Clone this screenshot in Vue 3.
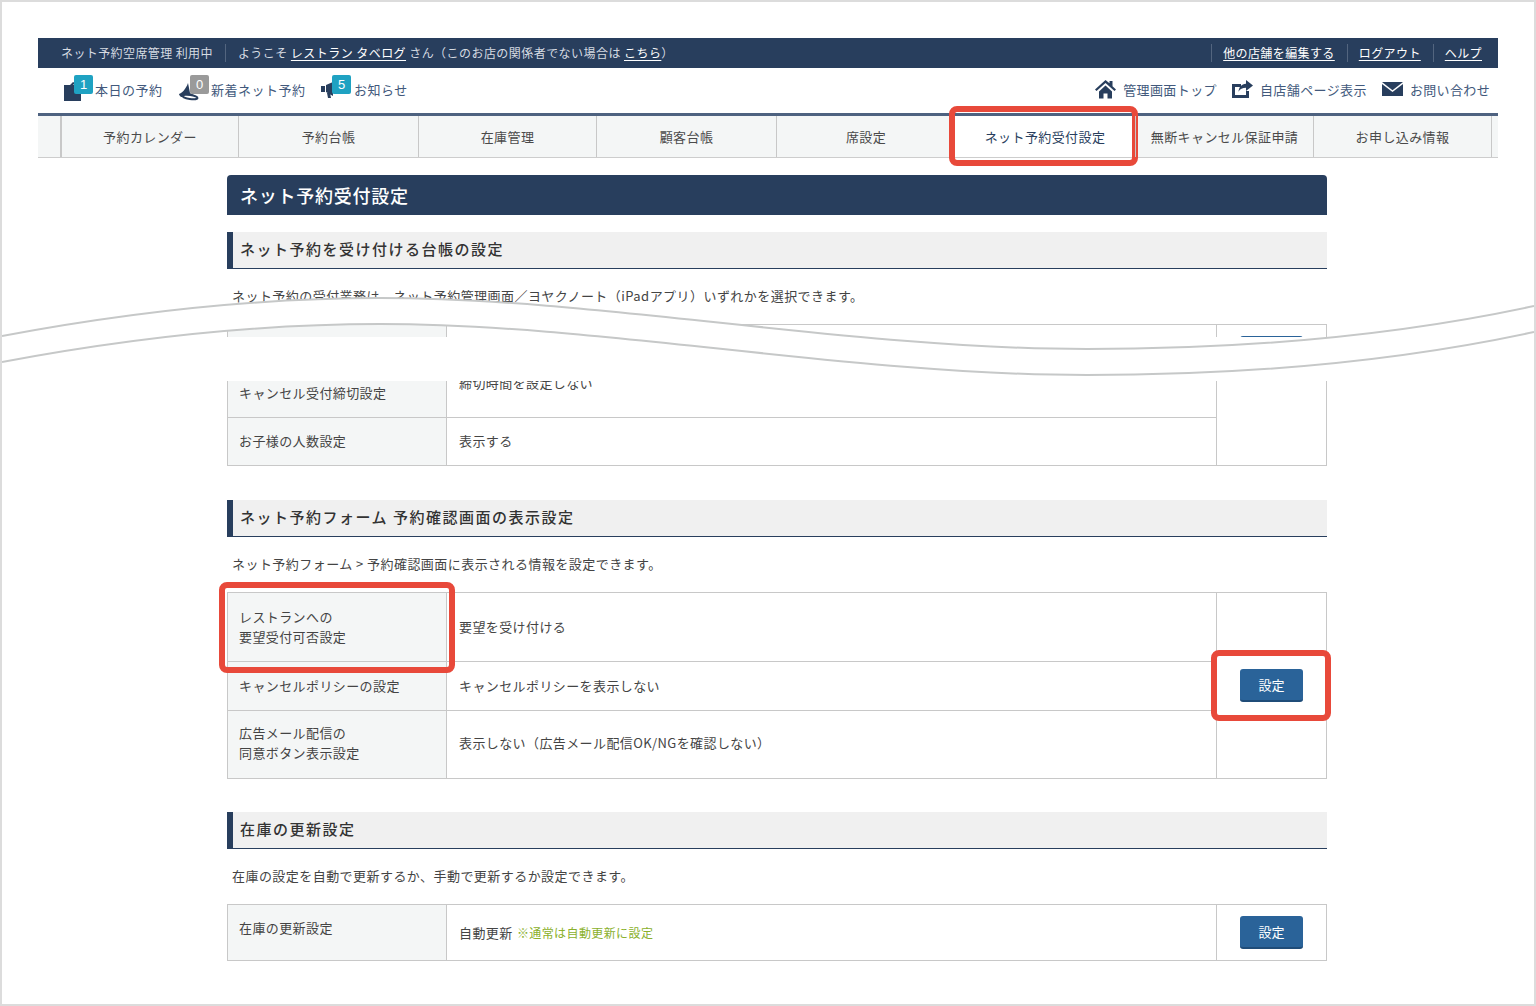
<template>
  <div class="frame">
    <div class="topbar">
      <div class="topbar-left">
        <span class="status">ネット予約空席管理 利用中</span>
        <span class="welcome">ようこそ <a>レストラン タベログ</a> さん（このお店の関係者でない場合は <a>こちら</a>）</span>
      </div>
      <div class="topbar-right">
        <a v-for="l in topLinks" :key="l">{{ l }}</a>
      </div>
    </div>

    <div class="subbar">
      <div class="subbar-left">
        <div class="sub-item first">
          <svg class="ico" width="20" height="24" viewBox="0 0 20 24">
            <path d="M0 6h6l3-3 2 1-2 2h8v16H0z" fill="#283e5d" />
          </svg>
          <span class="badge teal">1</span>
          <span>本日の予約</span>
        </div>
        <div class="sub-item second">
          <svg class="ico" width="24" height="24" viewBox="0 0 24 24">
            <path d="M10 4l2 10 6 3-15 1c-1-1-2-2-2-3 3-1 7-5 9-11z" fill="#283e5d" />
            <ellipse cx="12" cy="18" rx="7.500" ry="2" transform="rotate(8 12 18)" fill="#fff" stroke="#283e5d" stroke-width="2" />
          </svg>
          <span class="badge grey">0</span>
          <span>新着ネット予約</span>
        </div>
        <div class="sub-item third">
          <svg class="ico" width="20" height="24" viewBox="0 0 20 24">
            <path d="M1 7h4v6H1zM6 6l7-3v14l-7-4zM7 14h3l1 5H8z" fill="#283e5d" />
          </svg>
          <span class="badge teal">5</span>
          <span>お知らせ</span>
        </div>
      </div>
      <div class="subbar-right">
        <div class="util">
          <svg width="21" height="20" viewBox="0 0 21 20">
            <path d="M10.500 1L0 10.500l1.500 1.600 9-8 9 8 1.500-1.600-3.500-3.200V2h-3v2.200z" fill="#283e5d" />
            <path d="M4 12.500l6.500-6 6.500 6V19.500h-4.500v-5h-4v5H4z" fill="#283e5d" />
          </svg>
          <span>管理画面トップ</span>
        </div>
        <div class="util">
          <svg width="21" height="18" viewBox="0 0 21 18">
            <path d="M0 4h9v3H3v8h11v-4h3v7H0z" fill="#283e5d" />
            <path d="M14 0l7 5.500-7 5.500V7.800c-3.500 0-6 1-7.500 4 .3-4.500 3-7.500 7.500-8z" fill="#283e5d" />
          </svg>
          <span>自店舗ページ表示</span>
        </div>
        <div class="util">
          <svg width="21" height="14" viewBox="0 0 21 14">
            <path d="M0 0h21L10.500 8.200z" fill="#283e5d" />
            <path d="M0 2l10.500 8L21 2v12H0z" fill="#283e5d" />
          </svg>
          <span>お問い合わせ</span>
        </div>
      </div>
    </div>

    <nav class="nav">
      <div></div>
      <div v-for="n in navItems" :key="n" class="nav-cell" :class="{ active: n === activeNav }">
        {{ n }}
        <span v-if="n === activeNav" class="callout nav-callout"></span>
      </div>
      <div class="nav-cell"></div>
    </nav>

    <main class="content">
      <h1 class="page-title">ネット予約受付設定</h1>

      <h2 class="section-head first-head">ネット予約を受け付ける台帳の設定</h2>
      <p class="lead">ネット予約の受付業務は、ネット予約管理画面／ヨヤクノート（iPadアプリ）いずれかを選択できます。</p>

      <div class="cut cut-top">
        <table class="tbl">
          <tbody>
            <tr class="h48">
              <th></th>
              <td></td>
              <td class="act act-top"><button class="btn"></button></td>
            </tr>
          </tbody>
        </table>
      </div>
      <div class="cut cut-bottom">
        <table class="tbl">
          <tbody>
            <tr class="h36">
              <th class="pull-label">キャンセル受付締切設定</th>
              <td class="pull-value">締切時間を設定しない</td>
              <td class="act" rowspan="2"></td>
            </tr>
            <tr class="h48">
              <th>お子様の人数設定</th>
              <td>表示する</td>
            </tr>
          </tbody>
        </table>
      </div>

      <h2 class="section-head">ネット予約フォーム 予約確認画面の表示設定</h2>
      <p class="lead">ネット予約フォーム > 予約確認画面に表示される情報を設定できます。</p>
      <table class="tbl">
        <tbody>
          <tr class="h69">
            <th class="has-callout">
              レストランへの<br />要望受付可否設定
              <span class="callout label-callout"></span>
            </th>
            <td>要望を受け付ける</td>
            <td class="act" rowspan="3">
              <button class="btn has-callout">設定<span class="callout btn-callout"></span></button>
            </td>
          </tr>
          <tr class="h49 up1">
            <th>キャンセルポリシーの設定</th>
            <td>キャンセルポリシーを表示しない</td>
          </tr>
          <tr class="h68 up2">
            <th>広告メール配信の<br />同意ボタン表示設定</th>
            <td>表示しない（広告メール配信OK/NGを確認しない）</td>
          </tr>
        </tbody>
      </table>

      <h2 class="section-head last-head">在庫の更新設定</h2>
      <p class="lead">在庫の設定を自動で更新するか、手動で更新するか設定できます。</p>
      <table class="tbl">
        <tbody>
          <tr class="h56">
            <th class="raise">在庫の更新設定</th>
            <td class="lower">自動更新 <span class="note">※通常は自動更新に設定</span></td>
            <td class="act"><button class="btn">設定</button></td>
          </tr>
        </tbody>
      </table>
    </main>

    <!-- 省略を示す波線 -->
    <svg class="wave" width="1536" height="400" viewBox="0 0 1536 400">
      <path
        d="M2 336C130 312 260 298 380 298C600 298 850 349 1087 349C1250 349 1400 335 1534 306V332C1400 361 1250 375 1087 375C850 375 600 324 380 324C260 324 130 338 2 362Z"
        fill="#fff"
      />
      <path d="M2 336C130 312 260 298 380 298C600 298 850 349 1087 349C1250 349 1400 335 1534 306" fill="none" stroke="#c6c8c8" stroke-width="2" />
      <path d="M2 362C130 338 260 324 380 324C600 324 850 375 1087 375C1250 375 1400 361 1534 332" fill="none" stroke="#c6c8c8" stroke-width="2" />
    </svg>
  </div>
</template>

<script setup>
const topLinks = ['他の店舗を編集する', 'ログアウト', 'ヘルプ']
const activeNav = 'ネット予約受付設定'
const navItems = [
  '予約カレンダー',
  '予約台帳',
  '在庫管理',
  '顧客台帳',
  '席設定',
  'ネット予約受付設定',
  '無断キャンセル保証申請',
  'お申し込み情報'
]
</script>

<style>
html,
body {
  margin: 0;
  background: #fff;
}
</style>

<style scoped>
.frame {
  position: relative;
  width: 1536px;
  height: 1006px;
  box-sizing: border-box;
  border: 2px solid #dcdcdc;
  padding: 36px 36px 0;
  overflow: hidden;
  background: #fff;
  color: #444;
  font-family: "Noto Sans CJK JP", "Noto Sans", sans-serif;
  font-size: 13px;
  letter-spacing: 0.4px;
}

.topbar {
  height: 30px;
  background: #283e5d;
  color: #d6dbe2;
  font-size: 12px;
  display: flex;
  align-items: center;
  justify-content: space-between;
  padding: 0 16px 0 23px;
}
.topbar-left {
  display: flex;
  align-items: center;
}
.status {
  line-height: 18px;
}
.welcome {
  margin-left: 12px;
  padding-left: 12px;
  border-left: 1px solid #53657f;
  line-height: 18px;
  letter-spacing: 0.45px;
  white-space: pre-wrap;
}
.topbar a {
  color: #fff;
  text-decoration: underline;
  text-underline-offset: 2px;
}
.topbar-right {
  display: flex;
}
.topbar-right a {
  margin-left: 12px;
  padding-left: 12px;
  line-height: 18px;
  position: relative;
}
.topbar-right a::before {
  content: "";
  position: absolute;
  left: 0;
  top: 0;
  bottom: 0;
  border-left: 1px solid #53657f;
}

.subbar {
  height: 45px;
  display: flex;
  justify-content: space-between;
  color: #42597c;
  letter-spacing: 0.5px;
  box-sizing: border-box;
}
.subbar-left {
  display: flex;
  padding-left: 26px;
}
.sub-item {
  position: relative;
  line-height: 44px;
  white-space: nowrap;
}
.sub-item.first {
  width: 114px;
  padding-left: 31px;
  box-sizing: border-box;
}
.sub-item.second {
  width: 142px;
  padding-left: 33px;
  box-sizing: border-box;
}
.sub-item.third {
  padding-left: 34px;
}
.ico {
  position: absolute;
  left: 0;
  top: 11px;
}
.badge {
  position: absolute;
  top: 7px;
  width: 19px;
  height: 19px;
  border-radius: 2px;
  color: #fff;
  font-size: 13px;
  line-height: 19px;
  text-align: center;
  letter-spacing: 0;
  font-family: "Liberation Sans", sans-serif;
}
.first .badge {
  left: 10px;
}
.second .badge {
  left: 12px;
}
.third .badge {
  left: 12px;
}
.teal {
  background: #1fa2c2;
}
.grey {
  background: #9a9a9a;
}
.subbar-right {
  display: flex;
  gap: 15px;
  padding: 0 8px 3px 0;
  align-items: center;
}
.util {
  display: flex;
  align-items: center;
  gap: 7px;
  white-space: nowrap;
  letter-spacing: 0.4px;
}
.util:last-child {
  letter-spacing: 0.35px;
}

.nav {
  display: grid;
  grid-template-columns: 22px 178px 180px 178px 180px 179px 180px 178px 178px 7px;
  height: 45px;
  box-sizing: border-box;
  border-top: 3px solid #4e6280;
  border-bottom: 1px solid #cdcdcd;
  background: #f4f6f6;
}
.nav-cell {
  position: relative;
  display: flex;
  align-items: center;
  justify-content: center;
  border-left: 1px solid #c8c8c8;
  color: #4a4a4a;
  white-space: nowrap;
}
.nav-cell:nth-child(2) {
  border-left-width: 2px;
}
.nav-cell.active {
  background: #fff;
  color: #283e5d;
  border-left: none;
}

.callout {
  position: absolute;
  box-sizing: border-box;
  border: 6px solid #e8493a;
  border-radius: 8px;
  pointer-events: none;
}
.nav-callout {
  left: -6px;
  right: -3px;
  top: -10px;
  bottom: -9px;
}
.has-callout {
  position: relative;
}
.label-callout {
  left: -9px;
  right: -9px;
  top: -11px;
  bottom: -12px;
}
.btn-callout {
  left: -29px;
  right: -28px;
  top: -19px;
  bottom: -21px;
}

.content {
  width: 1100px;
  margin: 17px 0 0 189px;
}
.page-title {
  margin: 0;
  height: 40px;
  line-height: 40px;
  padding-left: 13px;
  background: #283e5d;
  border-radius: 4px 4px 0 0;
  color: #fff;
  font-size: 18px;
  font-weight: 500;
  letter-spacing: 0.75px;
}
.section-head {
  margin: 34px 0 0;
  height: 37px;
  box-sizing: border-box;
  line-height: 33px;
  padding-left: 7px;
  background: #f0f0f0;
  border-left: 6px solid #283e5d;
  border-bottom: 1px solid #283e5d;
  color: #333;
  font-size: 15px;
  font-weight: 500;
  letter-spacing: 1.5px;
}
.first-head {
  margin-top: 17px;
}
.last-head {
  margin-top: 33px;
}
.lead {
  margin: 18px 0 19px 5px;
  line-height: 18px;
  color: #444;
  letter-spacing: 0.45px;
}

.cut {
  overflow: hidden;
}
.cut-top {
  height: 13px;
  margin-bottom: 44px;
}
.cut-bottom {
  height: 85px;
}
.tbl {
  width: 1100px;
  table-layout: fixed;
  border-collapse: collapse;
}
.tbl th,
.tbl td {
  border: 1px solid #c8c8c8;
  padding: 0 12px;
  font-weight: 400;
  text-align: left;
  line-height: 20px;
}
.tbl th {
  width: 219px;
  box-sizing: border-box;
  padding: 0 11px;
  background: #f4f6f6;
  color: #444;
}
.tbl td.act {
  width: 110px;
  box-sizing: border-box;
  padding: 0;
  text-align: center;
}
.tbl td.act-top {
  vertical-align: top;
  padding-top: 11px;
}
.cut-bottom th,
.cut-bottom td {
  border-top: none;
}
.tbl th.pull-label {
  padding-bottom: 12px;
}
.tbl td.pull-value {
  vertical-align: top;
  line-height: 4px;
}
.tbl .up1 th,
.tbl .up1 td {
  padding-bottom: 1px;
}
.tbl .up2 th,
.tbl .up2 td {
  padding-bottom: 3px;
}
.h36 {
  height: 36px;
}
.h48 {
  height: 48px;
}
.h49 {
  height: 49px;
}
.h56 {
  height: 56px;
}
.h68 {
  height: 68px;
}
.h69 {
  height: 69px;
}
.tbl th.raise {
  vertical-align: top;
  padding-top: 13px;
}
.tbl td.lower {
  padding-top: 1px;
}
.note {
  color: #8ab02c;
  font-size: 12px;
  margin-left: 1px;
}
.btn {
  display: inline-block;
  vertical-align: middle;
  width: 63px;
  height: 33px;
  box-sizing: border-box;
  padding: 0;
  border: none;
  border-bottom: 2px solid #1f4c78;
  border-radius: 3px;
  background: #2a6399;
  color: #fff;
  font-family: inherit;
  font-size: 13px;
  line-height: 30px;
}

.wave {
  position: absolute;
  left: -2px;
  top: -2px;
  pointer-events: none;
}
</style>
